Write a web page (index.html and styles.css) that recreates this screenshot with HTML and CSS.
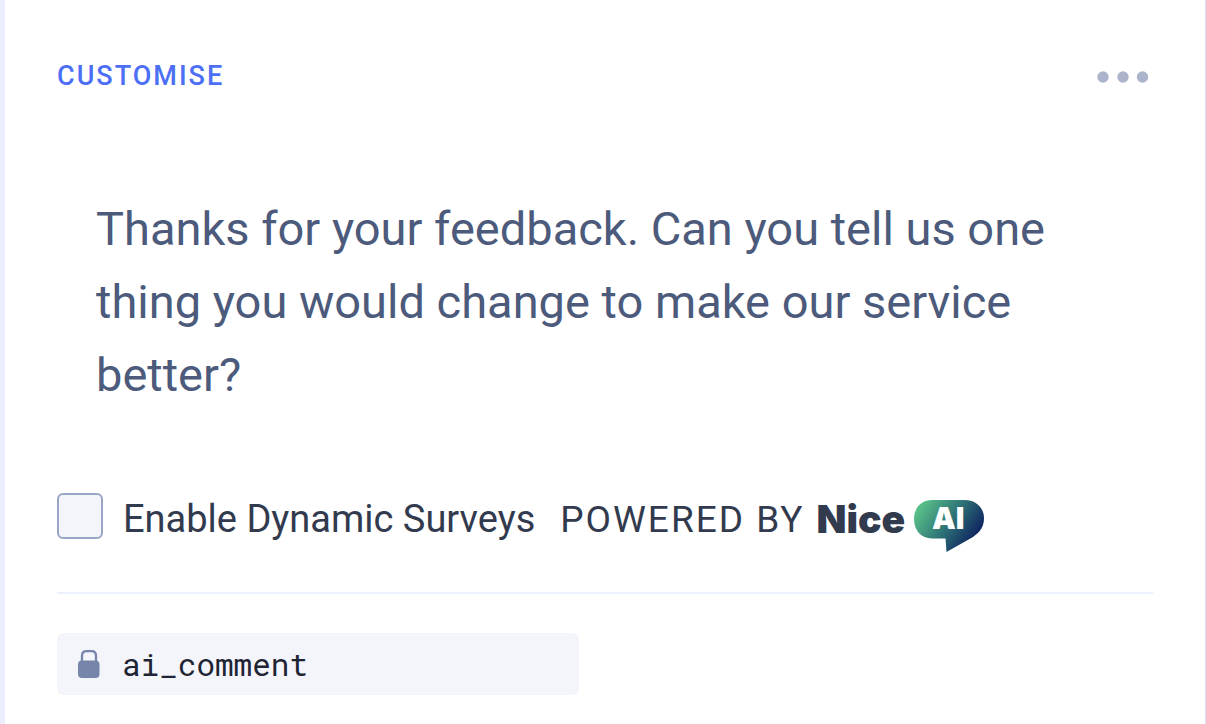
FILE: index.html
```html
<!DOCTYPE html>
<html lang="en">
<head>
<meta charset="utf-8">
<title>Customise</title>
<link rel="stylesheet" href="styles.css">
</head>
<body>
<main class="card">
  <header class="card-header">
    <h1 class="card-title">CUSTOMISE</h1>
    <button class="menu-button" type="button" aria-label="More options">
      <svg width="52" height="12" viewBox="0 0 52 12" fill="#abb4cb"><circle cx="6" cy="6" r="5.7"/><circle cx="26" cy="6" r="5.7"/><circle cx="45.500" cy="6" r="5.700"/></svg>
    </button>
  </header>
  <p class="question">Thanks for your feedback. Can you tell us one thing you would change to make our service better?</p>
  <div class="option">
    <input class="option-check" type="checkbox" id="dynamic">
    <label class="option-label" for="dynamic">Enable Dynamic Surveys</label>
    <span class="powered">POWERED BY</span>
    <span class="brand">Nice</span>
    <span class="bubble">
      <svg class="bubble-shape" width="72" height="54" viewBox="0 0 72 54" aria-hidden="true">
        <defs><linearGradient id="bubble-fill" gradientUnits="userSpaceOnUse" x1="10" y1="4" x2="60" y2="38"><stop offset="0" stop-color="#58bf88"/><stop offset=".5" stop-color="#317878"/><stop offset="1" stop-color="#112b62"/></linearGradient></defs>
        <path fill="url(#bubble-fill)" d="M19 1H52C63 1 71 9 71 19C71 28 67 33 60 38L33.500 53L32.500 39.500H19C8 39.500 1 31 1 20C1 9 8 1 19 1Z"/>
      </svg>
      <span class="bubble-text">AI</span>
    </span>
  </div>
  <hr class="rule">
  <div class="field">
    <svg class="lock" width="22" height="28" viewBox="0 0 22 28" aria-hidden="true"><path d="M4 12V6Q4 1.200 8.500 1.200H13.500Q18 1.200 18 6V12" fill="none" stroke="#7785ab" stroke-width="2.300"/><rect x="0" y="10.500" width="21.500" height="17.500" rx="4" fill="#7785ab"/></svg>
    <input class="field-input" type="text" value="ai_comment" aria-label="Field name" readonly>
  </div>
</main>
</body>
</html>
```
FILE: styles.css
```css
* { box-sizing: border-box; }
body {
  margin: 0;
  background: #fff;
  font-family: Roboto, "Liberation Sans", sans-serif;
}
.card {
  min-height: 100vh;
  padding: 56px 52px 28px;
  border-left: 5px solid #ebeefd;
  border-right: 1px solid #d9def5;
}
.card-header {
  display: flex;
  justify-content: space-between;
  align-items: center;
  height: 40px;
}
.card-title {
  margin: 0;
  font-size: 27px;
  font-weight: 500;
  letter-spacing: 2px;
  color: #4c6ff5;
}
.menu-button {
  display: flex;
  margin: 2px 4px 0 0;
  padding: 0;
  border: 0;
  background: none;
}
.question {
  margin: 96px 39px 80px;
  font-size: 47px;
  line-height: 73px;
  color: #4c5a7b;
}
.option {
  display: flex;
  align-items: center;
  height: 54px;
  color: #323a4e;
  white-space: nowrap;
}
.option-check {
  appearance: none;
  flex: none;
  width: 46px;
  height: 46px;
  margin: 0 20px 4px 0;
  border: 2px solid #9aa6c6;
  border-radius: 6px;
  background: #f4f5fb;
}
.option-check:checked { background: #4c6ff5; }
.option-label {
  margin: 2px 25px 0 0;
  font-size: 38px;
}
.powered {
  margin: 2px 12px 0 0;
  font-size: 37px;
  letter-spacing: 2px;
}
.brand {
  margin-right: 8px;
  font-family: Inter, sans-serif;
  font-size: 39px;
  font-weight: 900;
}
.bubble {
  display: grid;
  margin-top: 16px;
}
.bubble-shape, .bubble-text { grid-area: 1 / 1; }
.bubble-text {
  z-index: 1;
  justify-self: center;
  padding-right: 2px;
  font-family: Inter, sans-serif;
  font-size: 30px;
  line-height: 38px;
  font-weight: 900;
  color: #fff;
}
.rule {
  height: 2px;
  margin: 47px 0 39px;
  border: 0;
  background: #edf0fd;
}
.field {
  display: flex;
  align-items: center;
  width: 522px;
  max-width: 100%;
  height: 62px;
  padding: 0 21px;
  border-radius: 6px;
  background: #f4f5fb;
}
.lock { flex: none; }
.field-input {
  flex: 1;
  min-width: 0;
  margin-left: 22px;
  padding: 0;
  border: 0;
  outline: 0;
  background: none;
  font-family: "Roboto Mono", "DejaVu Sans Mono", monospace;
  font-size: 31px;
  color: #1f2433;
}
```
